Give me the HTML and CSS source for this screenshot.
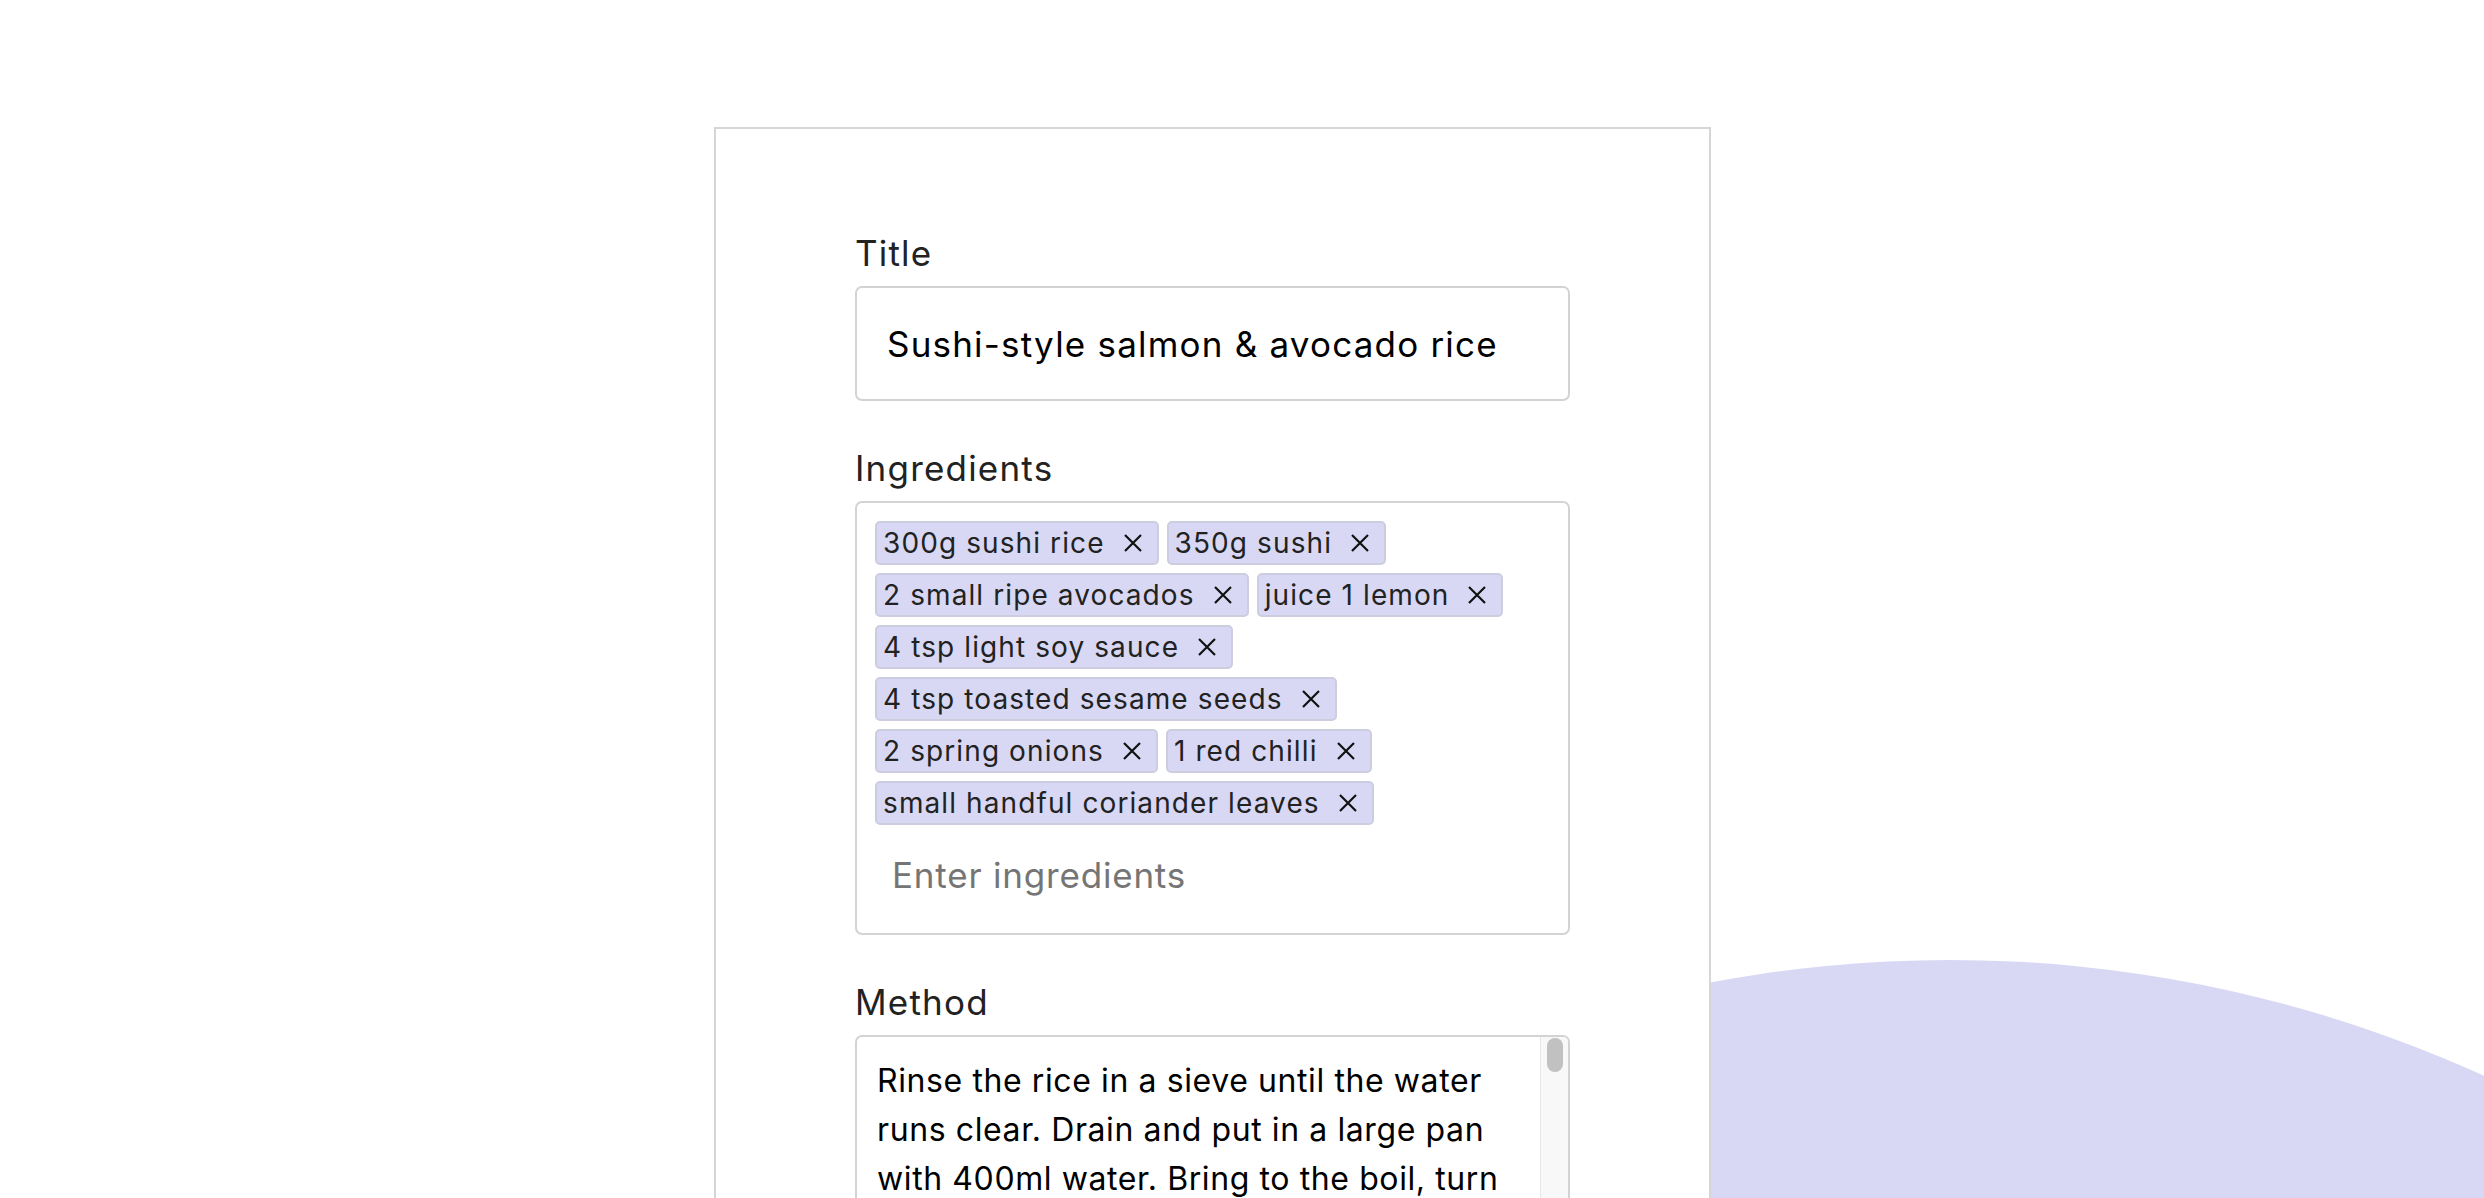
FILE: index.html
```html
<!DOCTYPE html>
<html lang="en">
<head>
<meta charset="utf-8">
<title>Recipe form</title>
<link rel="stylesheet" href="styles.css">
</head>
<body>
<div class="blob"></div>
<main class="card">
  <form class="form">
    <div class="field">
      <label class="label" for="title">Title</label>
      <input class="text-input" id="title" type="text" value="Sushi-style salmon &amp; avocado rice">
    </div>
    <div class="field">
      <label class="label" for="ing">Ingredients</label>
      <div class="tag-box">
        <div class="tags">
          <span class="tag">300g sushi rice <svg class="tag-x" viewBox="0 0 20 20"><path d="M2 2L18 18M18 2L2 18"/></svg></span>
          <span class="tag">350g sushi <svg class="tag-x" viewBox="0 0 20 20"><path d="M2 2L18 18M18 2L2 18"/></svg></span>
          <span class="tag">2 small ripe avocados <svg class="tag-x" viewBox="0 0 20 20"><path d="M2 2L18 18M18 2L2 18"/></svg></span>
          <span class="tag">juice 1 lemon <svg class="tag-x" viewBox="0 0 20 20"><path d="M2 2L18 18M18 2L2 18"/></svg></span>
          <span class="tag">4 tsp light soy sauce <svg class="tag-x" viewBox="0 0 20 20"><path d="M2 2L18 18M18 2L2 18"/></svg></span>
          <span class="tag">4 tsp toasted sesame seeds <svg class="tag-x" viewBox="0 0 20 20"><path d="M2 2L18 18M18 2L2 18"/></svg></span>
          <span class="tag">2 spring onions <svg class="tag-x" viewBox="0 0 20 20"><path d="M2 2L18 18M18 2L2 18"/></svg></span>
          <span class="tag">1 red chilli <svg class="tag-x" viewBox="0 0 20 20"><path d="M2 2L18 18M18 2L2 18"/></svg></span>
          <span class="tag">small handful coriander leaves <svg class="tag-x" viewBox="0 0 20 20"><path d="M2 2L18 18M18 2L2 18"/></svg></span>
        </div>
        <input class="ing-input" id="ing" type="text" placeholder="Enter ingredients">
      </div>
    </div>
    <div class="field">
      <label class="label">Method</label>
      <div class="method-box">
        <div class="method-text">Rinse the rice in a sieve until the water<br>runs clear. Drain and put in a large pan<br>with 400ml water. Bring to the boil, turn<br>down the heat, cover and simmer for 10 mins, or until all the water is absorbed. Remove from the heat, cover with a clean tea towel and leave to stand for 10 mins.</div>
        <div class="scrollbar"><div class="thumb"></div></div>
      </div>
    </div>
  </form>
</main>
</body>
</html>
```
FILE: styles.css
```css
* { box-sizing: border-box; }

html, body {
  margin: 0;
  height: 1198px;
  overflow: hidden;
  background: #ffffff;
}

body {
  position: relative;
  font-family: "Inter", "Noto Sans", sans-serif;
  color: #222222;
}

.blob {
  position: absolute;
  left: 660px;
  top: 960px;
  width: 2580px;
  height: 2580px;
  border-radius: 50%;
  background: #d8d8f4;
  z-index: 0;
}

.card {
  position: relative;
  z-index: 1;
  width: 997px;
  min-height: 1300px;
  margin: 127px 0 0 714px;
  padding: 99px 139px;
  background: #ffffff;
  border: 2px solid #d6d6d6;
}

.form {
  display: flex;
  flex-direction: column;
  gap: 42px;
}

.field {
  display: flex;
  flex-direction: column;
}

.label {
  display: block;
  font-size: 35px;
  line-height: 50px;
  letter-spacing: 1.2px;
  margin-bottom: 8px;
  color: #222222;
}

.text-input {
  height: 115px;
  width: 100%;
  border: 2px solid #d3d3d3;
  border-radius: 7px;
  padding: 0 30px;
  font-family: "Inter", "Noto Sans", sans-serif;
  font-size: 35px;
  letter-spacing: 1.2px;
  color: #000000;
  outline: none;
  background: #ffffff;
}

.tag-box {
  border: 2px solid #d3d3d3;
  border-radius: 7px;
  padding: 18px 18px 33px;
}

.tags {
  display: flex;
  flex-wrap: wrap;
  gap: 8px;
}

.tag {
  display: inline-flex;
  align-items: center;
  gap: 18px;
  height: 44px;
  padding: 0 14px 0 6px;
  background: #d8d8f4;
  border: 2px solid #cdcde0;
  border-radius: 5px;
  font-size: 28px;
  letter-spacing: 1.1px;
  color: #222222;
  white-space: nowrap;
}

.tag-x {
  width: 20px;
  height: 20px;
  fill: none;
  stroke: #111111;
  stroke-width: 2.2;
}

.ing-input {
  display: block;
  width: 100%;
  margin-top: 25px;
  height: 50px;
  padding: 0 0 0 17px;
  border: none;
  outline: none;
  background: transparent;
  font-family: "Inter", "Noto Sans", sans-serif;
  font-size: 35px;
  letter-spacing: 0.8px;
  color: #000000;
}

.ing-input::placeholder {
  color: #757575;
}

.method-box {
  display: flex;
  height: 420px;
  border: 2px solid #d3d3d3;
  border-radius: 7px;
  overflow: hidden;
}

.method-text {
  flex: 1;
  padding: 19px 20px;
  font-size: 32px;
  line-height: 49px;
  letter-spacing: 0.6px;
  color: #000000;
  white-space: nowrap;
  overflow: hidden;
}

.scrollbar {
  width: 28px;
  background: #f8f8f8;
  border-left: 1px solid #e6e6e6;
}

.thumb {
  width: 16px;
  height: 34px;
  margin: 1px 0 0 6px;
  border-radius: 8px;
  background: #c1c1c1;
}
```
